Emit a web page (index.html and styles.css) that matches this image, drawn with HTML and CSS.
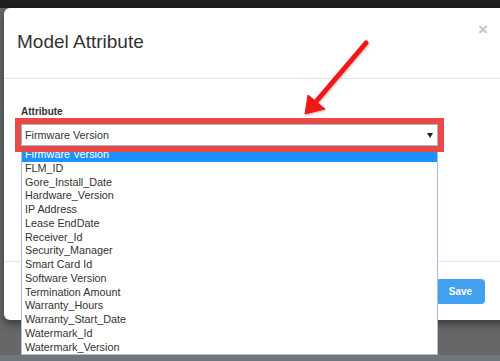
FILE: index.html
```html
<!DOCTYPE html>
<html lang="en">
<head>
  <meta charset="UTF-8">
  <meta name="viewport" content="width=device-width, initial-scale=1.0">
  <title>Model Attribute</title>
  <link rel="stylesheet" href="styles.css">
</head>
<body>
  <div class="topbar"></div>

  <div class="modal">
    <!-- 헤더 -->
    <div class="modal-header">
      <h4 class="modal-title">Model Attribute</h4>
      <span class="close">&times;</span>
    </div>

    <!-- 본문 -->
    <div class="modal-body">
      <div class="field">
        <label class="field-label">Attribute</label>
        <div class="select-wrap">
          <div class="select">
            <span>Firmware Version</span>
            <span class="caret"></span>
          </div>
        </div>
        <ul class="dropdown">
          <li class="active">Firmware Version</li>
          <li>FLM_ID</li>
          <li>Gore_Install_Date</li>
          <li>Hardware_Version</li>
          <li>IP Address</li>
          <li>Lease EndDate</li>
          <li>Receiver_Id</li>
          <li>Security_Manager</li>
          <li>Smart Card Id</li>
          <li>Software Version</li>
          <li>Termination Amount</li>
          <li>Warranty_Hours</li>
          <li>Warranty_Start_Date</li>
          <li>Watermark_Id</li>
          <li>Watermark_Version</li>
        </ul>
      </div>
    </div>

    <!-- 하단 버튼 -->
    <div class="modal-footer">
      <button class="btn-save">Save</button>
    </div>
  </div>

  <div class="bottombar"></div>

  <!-- 빨간 화살표 -->
  <svg class="arrow" width="500" height="361" viewBox="0 0 500 361">
    <g fill="#f21717" stroke="#f21717" filter="url(#shadow)">
      <line x1="366" y1="43" x2="314" y2="104" stroke-width="5" stroke-linecap="round"/>
      <polygon points="305,114 308,95 325,109" stroke-width="1" stroke-linejoin="round"/>
    </g>
    <defs>
      <filter id="shadow" x="-20%" y="-20%" width="140%" height="140%">
        <feDropShadow dx="1" dy="1" stdDeviation="1" flood-color="#000" flood-opacity="0.25"/>
      </filter>
    </defs>
  </svg>
</body>
</html>
```

FILE: styles.css
```css
/* 페이지 배경 */
body {
  margin: 0;
  height: 361px;
  overflow: hidden;
  display: flex;
  flex-direction: column;
  background-color: #676767;
  font-family: "Liberation Sans", Arial, sans-serif;
  color: #333;
}

.topbar {
  height: 8px;
  background-color: #1d1f23;
}

.bottombar {
  margin-top: auto;
  height: 6px;
  background-color: #6e777b;
}

/* 모달 창 */
.modal {
  margin-left: 4px;
  width: 510px;
  height: 312px;
  flex-shrink: 0;
  background-color: #fff;
  border-radius: 6px;
  box-shadow: 0 4px 9px rgba(0, 0, 0, 0.45);
  display: flex;
  flex-direction: column;
}

.modal-header {
  height: 71px;
  box-sizing: border-box;
  padding: 23px 26px 0 13px;
  border-bottom: 1px solid #e5e5e5;
  display: flex;
  justify-content: space-between;
  align-items: flex-start;
}

.modal-title {
  margin: 0;
  font-size: 19px;
  line-height: 22px;
  font-weight: normal;
  color: #333;
}

.close {
  font-size: 17px;
  line-height: 17px;
  font-weight: bold;
  color: #c6c6c6;
  margin-top: -10px;
}

.modal-body {
  height: 182px;
  box-sizing: border-box;
  padding: 27px 0 0 17px;
}

.field {
  position: relative;
  width: 417px;
}

.field-label {
  display: block;
  font-size: 10px;
  line-height: 12px;
  font-weight: bold;
  color: #333;
}

/* 빨간 표시 상자 */
.select-wrap {
  position: relative;
  z-index: 2;
  margin-left: -6px;
  width: 417px;
  border: 6px solid #e94a47;
}

.select {
  height: 22px;
  box-sizing: border-box;
  border: 1px solid #a7b3cf;
  background-color: #fff;
  padding: 0 4px 0 3px;
  display: flex;
  justify-content: space-between;
  align-items: center;
  font-size: 10.8px;
  color: #333;
}

.caret {
  width: 0;
  height: 0;
  border-left: 3px solid transparent;
  border-right: 3px solid transparent;
  border-top: 5px solid #222;
}

/* 펼쳐진 목록 */
.dropdown {
  position: absolute;
  z-index: 1;
  top: 41px;
  left: 0;
  width: 417px;
  box-sizing: border-box;
  margin: 0;
  padding: 0;
  list-style: none;
  background-color: #fff;
  border: 1px solid #a9bfe8;
  font-size: 10.8px;
  color: #333;
}

.dropdown li {
  height: 13.75px;
  line-height: 13.75px;
  padding-left: 3px;
}

.dropdown li.active {
  background-color: #1e90ff;
  color: #fff;
}

.modal-footer {
  flex: 1;
  border-top: 1px solid #e5e5e5;
  padding: 17px 29px 0 0;
  display: flex;
  justify-content: flex-end;
  align-items: flex-start;
}

.btn-save {
  width: 49px;
  height: 25px;
  border: none;
  border-radius: 4px;
  background-color: #41a0f0;
  color: #fff;
  font-family: "Liberation Sans", Arial, sans-serif;
  font-size: 10px;
  font-weight: bold;
  padding: 0;
}

.arrow {
  position: absolute;
  top: 0;
  left: 0;
  pointer-events: none;
}
```
